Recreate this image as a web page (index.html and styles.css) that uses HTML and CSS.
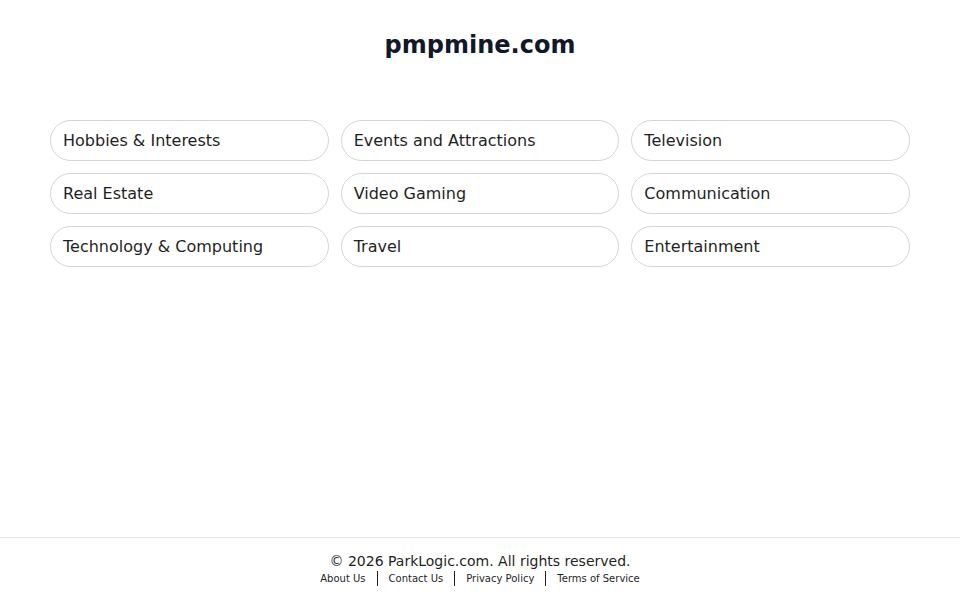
FILE: index.html
```html
<!DOCTYPE html>
<html lang="en">
<head>
    <meta charset="UTF-8">
    <meta name="viewport" content="width=device-width, initial-scale=1.0">
    <title>pmpmine.com</title>
    <link rel="stylesheet" href="styles.css">
</head>
<body>
    <main>
        <header>
            <h1>pmpmine.com</h1>
        </header>
        <div class="links">
            <a class="pill" href="#">Hobbies &amp; Interests</a>
            <a class="pill" href="#">Events and Attractions</a>
            <a class="pill" href="#">Television</a>
            <a class="pill" href="#">Real Estate</a>
            <a class="pill" href="#">Video Gaming</a>
            <a class="pill" href="#">Communication</a>
            <a class="pill" href="#">Technology &amp; Computing</a>
            <a class="pill" href="#">Travel</a>
            <a class="pill" href="#">Entertainment</a>
        </div>
    </main>
    <footer>
        <p class="copy">&copy; 2026 ParkLogic.com. All rights reserved.</p>
        <nav>
            <a href="#">About Us</a>
            <span class="sep"></span>
            <a href="#">Contact Us</a>
            <span class="sep"></span>
            <a href="#">Privacy Policy</a>
            <span class="sep"></span>
            <a href="#">Terms of Service</a>
        </nav>
    </footer>
</body>
</html>
```

FILE: styles.css
```css
html, body {
    height: 100%;
}
body {
    font-family: "DejaVu Sans", sans-serif;
    margin: 0;
    padding: 0;
    background-color: #fff;
    color: #1f1f1f;
    display: flex;
    flex-direction: column;
}
main {
    flex: 1;
    padding: 0 50px;
}
header {
    text-align: center;
    padding-top: 30px;
}
header h1 {
    margin: 0;
    font-size: 24px;
    line-height: 30px;
    font-weight: bold;
    color: #111827;
}
.links {
    display: grid;
    grid-template-columns: repeat(3, 1fr);
    gap: 12px;
    margin-top: 60px;
}
.pill {
    display: block;
    height: 41px;
    box-sizing: border-box;
    padding: 0 12px;
    line-height: 39px;
    border: 1px solid #d4d4d4;
    border-radius: 999px;
    font-size: 16px;
    color: #1f1f1f;
    text-decoration: none;
    white-space: nowrap;
}
footer {
    border-top: 1px solid #e5e5e5;
    text-align: center;
    padding: 13px 0 14px;
}
.copy {
    margin: 0;
    font-size: 14px;
    line-height: 20px;
    color: #1f1f1f;
}
footer nav {
    display: flex;
    justify-content: center;
    align-items: center;
    font-size: 10px;
    line-height: 15px;
}
footer nav a {
    color: #1f1f1f;
    text-decoration: none;
}
.sep {
    display: inline-block;
    width: 0;
    height: 15px;
    border-left: 1px solid #1f1f1f;
    margin: 0 11px;
}
```
